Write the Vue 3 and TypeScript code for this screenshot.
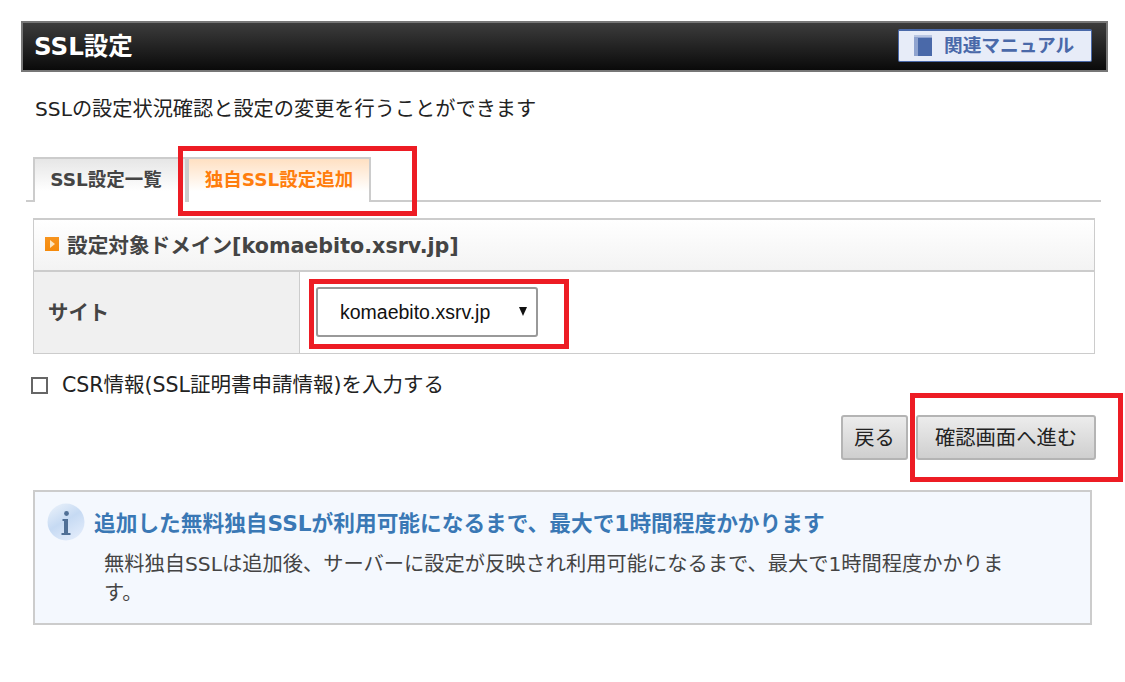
<script setup lang="ts">
const title = 'SSL設定'
</script>

<template>
  <div class="page">
    <header class="head">
      <h1>{{ title }}</h1>
      <a class="manual">
        <svg width="18" height="21" viewBox="0 0 18 21">
          <rect x="0" y="0" width="18" height="21" fill="#8fa3cf" />
          <rect x="0" y="0" width="18" height="2" fill="#b9c6e2" />
          <rect x="4" y="3" width="14" height="18" fill="#4a69a9" />
        </svg>
        <span>関連マニュアル</span>
      </a>
    </header>
    <p class="lead">SSLの設定状況確認と設定の変更を行うことができます</p>
    <div class="tabs">
      <div class="tab first">SSL設定一覧</div>
      <div class="tab active">独自SSL設定追加</div>
    </div>
    <section class="table">
      <div class="thead">
        <i class="bullet"></i>
        <span>設定対象ドメイン[komaebito.xsrv.jp]</span>
      </div>
      <div class="row">
        <div class="label">サイト</div>
        <div class="cell">
          <div class="select">
            <span>komaebito.xsrv.jp</span>
            <b class="caret"></b>
          </div>
        </div>
      </div>
    </section>
    <label class="check">
      <i class="box"></i>
      <span>CSR情報(SSL証明書申請情報)を入力する</span>
    </label>
    <div class="actions">
      <button class="btn back">戻る</button>
      <button class="btn next">確認画面へ進む</button>
    </div>
    <section class="info">
      <div class="info-title">
        <svg class="info-icon" width="38" height="38" viewBox="0 0 38 38">
          <defs>
            <linearGradient id="orb" x1="0" y1="0" x2="0.6" y2="1">
              <stop offset="0" stop-color="#eef4fb" />
              <stop offset="0.55" stop-color="#c6daf3" />
              <stop offset="1" stop-color="#dfeafa" />
            </linearGradient>
          </defs>
          <circle cx="19" cy="19" r="18.5" fill="url(#orb)" />
          <circle cx="19.5" cy="10.5" r="2.4" fill="#4f6f96" />
          <path d="M15.5 16h5.5v14h2.5v2H14.5v-2h2.5V18h-1.5z" fill="#4f6f96" />
        </svg>
        <h2>追加した無料独自SSLが利用可能になるまで、最大で1時間程度かかります</h2>
      </div>
      <p>無料独自SSLは追加後、サーバーに設定が反映され利用可能になるまで、最大で1時間程度かかります。</p>
    </section>

    <div class="mark mark-tab"></div>
    <div class="mark mark-select"></div>
    <div class="mark mark-btn"></div>
  </div>
</template>

<style>
html, body { margin: 0; background: #fff; }
</style>

<style scoped>
.page {
  position: relative;
  width: 1125px;
  height: 682px;
  overflow: hidden;
  box-sizing: border-box;
  padding: 21px 0 0 21px;
  font-family: "DejaVu Sans", "Noto Sans CJK JP", sans-serif;
  color: #222;
}
.head {
  box-sizing: border-box;
  width: 1087px;
  height: 51px;
  border: 2px solid #777;
  background: linear-gradient(#3c3c3c, #0a0a0a);
  display: flex;
  align-items: center;
  justify-content: space-between;
  padding: 0 14px 0 11px;
}
h1 {
  margin: 0;
  font-size: 24.5px;
  line-height: 32px;
  font-weight: 700;
  color: #fff;
}
.manual {
  box-sizing: border-box;
  width: 194px;
  height: 33px;
  margin-top: -3px;
  background: #e7ecf8;
  border: 1px solid #4a69a9;
  border-top-width: 2px;
  border-radius: 2px;
  display: flex;
  align-items: center;
  gap: 12px;
  padding: 0 0 0 15px;
  color: #4a69a9;
  font-size: 18.7px;
  font-weight: 700;
}
.manual span { margin-top: -4px; }
.lead {
  margin: 24px 0 0 14px;
  font-size: 20.2px;
  line-height: 26px;
  color: #222;
}
.tabs {
  margin: 35px 0 0 5px;
  width: 1075px;
  height: 45px;
  box-sizing: border-box;
  border-bottom: 2px solid #ccc;
  padding-left: 7px;
  display: flex;
}
.tab {
  box-sizing: border-box;
  height: 45px;
  width: 154px;
  border: 2px solid #ccc;
  border-bottom: 0;
  background: linear-gradient(#e6e6e6, #fff 75%);
  font-size: 18.5px;
  font-weight: 700;
  color: #444;
  display: flex;
  align-items: center;
  justify-content: center;
  padding-bottom: 6px;
}
.tab.first { padding-right: 8px; }
.tab.active {
  width: 184px;
  color: #ff7d0c;
  background: linear-gradient(#ffe0c2, #fff 75%);
  position: relative;
  height: 45px;
  margin-bottom: -2px;
}
.table {
  margin: 16px 0 0 12px;
  width: 1062px;
  box-sizing: border-box;
  border: 1px solid #ccc;
  border-top-width: 2px;
}
.thead {
  box-sizing: border-box;
  height: 52px;
  border-bottom: 2px solid #ccc;
  background: linear-gradient(#fff, #f3f3f3);
  display: flex;
  align-items: center;
  gap: 8px;
  padding: 0 0 2px 11px;
  font-size: 20.65px;
  font-weight: 700;
  color: #444;
}
.bullet {
  position: relative;
  width: 14px;
  height: 14px;
  background: linear-gradient(#f7941e, #f58a0b);
}
.bullet::after {
  content: "";
  position: absolute;
  left: 5px;
  top: 3px;
  border-left: 5px solid #fde6c0;
  border-top: 4px solid transparent;
  border-bottom: 4px solid transparent;
}
.row {
  display: flex;
  height: 81px;
}
.label {
  box-sizing: border-box;
  width: 266px;
  background: #f0f0f0;
  border-right: 1px solid #ccc;
  display: flex;
  align-items: center;
  padding: 0 0 3px 14px;
  font-size: 20.4px;
  font-weight: 700;
  color: #444;
}
.cell {
  flex: 1;
  display: flex;
  align-items: center;
  padding: 0 0 2px 16px;
}
.select {
  position: relative;
  box-sizing: border-box;
  width: 222px;
  height: 50px;
  background: #fff;
  border: 2px solid #999;
  border-radius: 3px;
  display: flex;
  align-items: center;
  padding: 2px 0 0 22px;
  font-family: "Liberation Sans", sans-serif;
  font-size: 19.5px;
  color: #111;
}
.caret {
  position: absolute;
  right: 9px;
  top: 18px;
  border-top: 9px solid #111;
  border-left: 4px solid transparent;
  border-right: 4px solid transparent;
}
.check {
  margin: 18px 0 0 10px;
  display: flex;
  align-items: center;
  gap: 14px;
  font-size: 20.5px;
  line-height: 26px;
  color: #222;
}
.box {
  box-sizing: border-box;
  width: 17px;
  height: 17px;
  border: 2px solid #666;
  background: #fff;
}
.actions {
  margin: 17px 0 0 0;
  width: 1075px;
  display: flex;
  justify-content: flex-end;
  gap: 8px;
}
.btn {
  box-sizing: border-box;
  height: 45px;
  border: 2px solid #b4b4b4;
  border-radius: 3px;
  background: linear-gradient(#ececec, #cfcfcf);
  font-family: "DejaVu Sans", "Noto Sans CJK JP", sans-serif;
  font-size: 20.3px;
  color: #222;
  padding: 0 0 4px;
}
.back { width: 67px; }
.next { width: 180px; }
.info {
  margin: 30px 0 0 12px;
  box-sizing: border-box;
  width: 1059px;
  height: 135px;
  border: 2px solid #ccc;
  background: #f4f8fe;
  padding: 11px 0 0 12px;
}
.info-title {
  display: flex;
  align-items: center;
  gap: 9px;
}
.info-icon { flex: none; }
h2 {
  margin: 0 0 1px;
  font-size: 21.7px;
  font-weight: 700;
  color: #3a78b5;
}
.info p {
  margin: 9px 0 0 57px;
  width: 905px;
  font-size: 20.25px;
  line-height: 29px;
  color: #444;
}
.mark {
  position: absolute;
  box-sizing: border-box;
  border: 5px solid #ed1c24;
  pointer-events: none;
}
.mark-tab { left: 178px; top: 146px; width: 239px; height: 70px; }
.mark-select { left: 309px; top: 279px; width: 260px; height: 70px; }
.mark-btn { left: 910px; top: 393px; width: 213px; height: 89px; }
</style>
